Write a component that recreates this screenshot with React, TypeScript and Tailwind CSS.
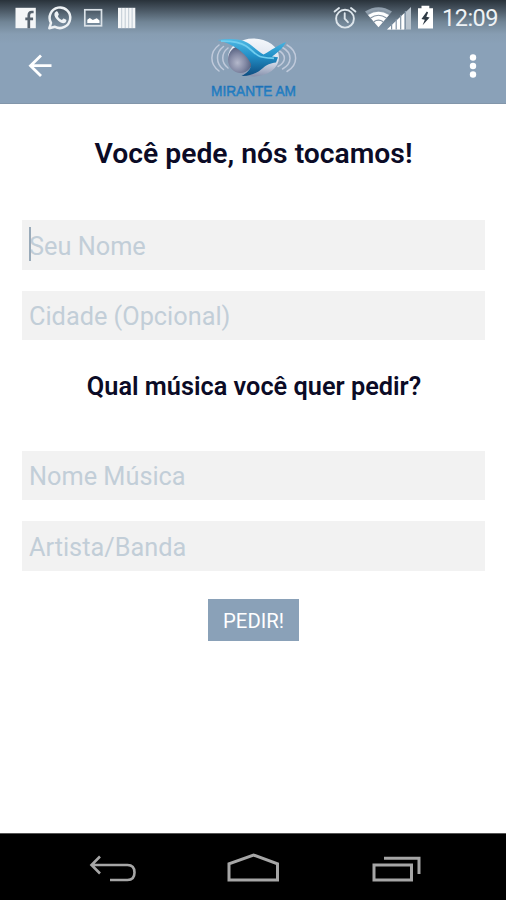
import { useState } from "react";

function StatusIcons() {
  return (
    <svg width="126" height="30" viewBox="13 2 126 30" fill="none">
      {/* facebook */}
      <path fill="#f4f6f8" d="M15.500 7.800h20.300v20.400h-20.300z" />
      <path stroke="#56626e" strokeWidth="2.700" d="M33.600 12h-1.800q-3 0-3 3.400V28.200M25.300 18.900h7.800" />
      {/* whatsapp */}
      <path
        d="M49.300 28.300l1.700-5.400a10.300 10.300 0 1 1 4 3.900z"
        stroke="#eef2f5"
        strokeWidth="2.500"
        strokeLinejoin="round"
      />
      <path
        fill="#eef2f5"
        d="M55.800 11.800c.8-.7 1.700-.5 2 .2l1 2.300c.2.600-.9 1.700-.9 2 .7 1.600 2.100 2.900 3.900 3.700.5 0 1.300-1.600 1.900-1.400l2.500 1.200c.6.400-.1 2.300-1 2.900-1.900 1.100-4.700.2-7-1.900-2.500-2.200-4.200-4.900-3.800-7 .2-.9.800-1.500 1.400-2z"
      />
      {/* picture */}
      <rect x="84.800" y="9.800" width="16.700" height="16" stroke="#dbe2e8" strokeWidth="1.700" />
      <path fill="#fff" d="M87.300 23v-3.200l2.500-1.800 3 2 4-1.800 2.700 2.300V23z" />
      {/* barcode */}
      <path fill="#f4f6f8" d="M118 7.800h17.300v20.400h-17.300z" />
      <path stroke="#b3bfca" strokeWidth=".8" d="M121.700 8v20M125.200 8v20M128.700 8v20M132.100 8v20" />
    </svg>
  );
}

function SystemIcons() {
  return (
    <svg width="104" height="30" viewBox="332 2 104 30" fill="none">
      {/* alarm */}
      <g stroke="#dde5eb" strokeWidth="1.900" strokeLinecap="round">
        <circle cx="346" cy="18.700" r="8.900" />
        <path d="M345.700 13.200v5.500l3.200 3.500" />
        <path d="M335.600 11.600l4.400-3.600M352 8l4.400 3.600" />
      </g>
      {/* wifi */}
      <path fill="#91a0ae" d="M366 11.500q13.500-8.500 27 0L379.500 27.200z" />
      <path fill="#fff" d="M369 15q10.500-6.500 21 0L379.500 27.200z" />
      <path
        stroke="#8795a4"
        strokeWidth="1.200"
        d="M368 14q11.500-7.500 23 0M371.500 18q8-5.500 16 0M374.800 21.800q4.700-3.200 9.400 0"
      />
      {/* signal */}
      <path fill="#b9c4ce" d="M388 29.500L412 7v22.500z" />
      <path fill="#fff" d="M388 29.500l17-16v16z" />
      <path stroke="#8193a5" strokeWidth="1.200" d="M392.600 24v5.500M397.200 19v10.500M401.700 15v14.500M406.400 11v18.500" />
      {/* battery */}
      <path fill="#fff" d="M419 8.300h3.500V5.800h7.800v2.500h3.700v20.200h-15z" />
      <path fill="#2e3a45" d="M427.800 11.500l-5.300 7.500 3.300.7-2.200 5.500 7-7.700-3.300-.7 1.800-4.300z" />
    </svg>
  );
}

function Logo() {
  return (
    <svg width="110" height="66" viewBox="200 34 110 66" fill="none">
      <defs>
        <radialGradient id="globe" cx=".38" cy=".62" r=".62">
          <stop offset="0" stopColor="#b4b8cb" />
          <stop offset=".5" stopColor="#858ba6" />
          <stop offset="1" stopColor="#4c5878" />
        </radialGradient>
        <linearGradient id="disc" x1=".6" y1="0" x2=".5" y2="1">
          <stop offset="0" stopColor="#f4f7fb" />
          <stop offset=".55" stopColor="#dce2ee" />
          <stop offset="1" stopColor="#8590ac" />
        </linearGradient>
        <linearGradient id="bird" x1="0" y1="0" x2="0" y2="1">
          <stop offset="0" stopColor="#4fb9e4" />
          <stop offset=".45" stopColor="#2391c8" />
          <stop offset="1" stopColor="#0d4c80" />
        </linearGradient>
        <linearGradient id="name" x1="0" y1="0" x2="0" y2="1">
          <stop offset="0" stopColor="#155da6" />
          <stop offset="1" stopColor="#2f9ad8" />
        </linearGradient>
      </defs>
      <g stroke="#c0cadb" strokeWidth="1.500" strokeLinecap="round">
        <path d="M219 45c-9.500 7-9.500 19 0 26M223.500 46.500c-8 6-8 17 0 23M228 48c-7 5.500-7 14.500 0 20" />
        <path d="M287 45c11.500 6.500 11.500 20 0 26.500M282.500 47.500c10 5.500 10 16 0 21.500M278 50c8.500 4.500 8.500 12 0 16.500" />
      </g>
      <ellipse cx="253.500" cy="57.500" rx="25.500" ry="19" fill="url(#disc)" />
      <ellipse cx="240.500" cy="59.500" rx="12.500" ry="13.500" fill="url(#globe)" />
      <path
        d="M217.500 40c11-1.500 22-1.500 29.500 2.500 7 4 11 9 16.500 12 8-4 14-9.500 22.500-12.500-2.500 5.500-8 10.500-14 14.500l6 .7-2 5.300c-6 .8-9 2-13 5.500-5 4.500-12.500 8.500-21.500 8 5.500-2.700 10-7.500 9.500-12C248 56.500 238 45.500 217.500 40z"
        fill="url(#bird)"
      />
      <path
        d="M221 41.200c11-.3 19 1 25 4.800 5.500 3.500 9 8.500 14 10.500 4 1.500 8 1.500 14 1.800"
        stroke="#6fcdef"
        strokeWidth="1.700"
      />
      <text
        x="211"
        y="95.500"
        textLength="85"
        lengthAdjust="spacingAndGlyphs"
        fontSize="15"
        fill="url(#name)"
        stroke="#1d76bd"
        strokeWidth=".5"
        className="font-['Liberation_Sans',sans-serif]"
      >
        MIRANTE AM
      </text>
    </svg>
  );
}

function Header() {
  return (
    <header className="h-[104px] shrink-0 border-b border-[#8296aa] bg-[#8aa1b8] bg-[linear-gradient(to_bottom,#29323a_0px,#46535f_9px,#718596_22px,#879db2_34px,#8aa1b8_44px)]">
      <div className="flex h-[34px] items-center justify-between pr-2 pl-[13px]">
        <StatusIcons />
        <div className="flex items-center gap-[7px]">
          <SystemIcons />
          <span className="pt-[3px] text-[23.500px] leading-none tracking-[-0.500px] text-[#eef2f5]">12:09</span>
        </div>
      </div>
      <div className="grid h-[66px] grid-cols-[1fr_110px_1fr] items-center pr-6 pl-7">
        <button aria-label="Voltar" className="justify-self-start pb-[3px]">
          <svg width="25" height="24" viewBox="0 0 25 24" fill="none" stroke="#fff" strokeWidth="2.800">
            <path d="M13 1.500L2.500 11.700 13 22M2.500 11.700H23.500" />
          </svg>
        </button>
        <Logo />
        <button aria-label="Menu" className="justify-self-end pb-[3px]">
          <svg width="14" height="24" viewBox="0 0 14 24" fill="#fff">
            <circle cx="5" cy="3.500" r="3.200" />
            <circle cx="5" cy="12" r="3.200" />
            <circle cx="5" cy="20.500" r="3.200" />
          </svg>
        </button>
      </div>
    </header>
  );
}

interface FieldProps {
  label: string;
  caret?: boolean;
}

function Field({ label, caret }: FieldProps) {
  const [value, setValue] = useState("");

  return (
    <div className="relative">
      {caret && <span className="absolute top-[7px] left-[7px] h-[34px] w-0.5 bg-[#9aabba]" />}
      <input
        value={value}
        onChange={(e) => setValue(e.target.value)}
        placeholder={label}
        className="block h-[49.500px] w-full bg-[#f2f2f2] px-[7px] pt-[3px] text-[25.300px] text-[#22303e] outline-none placeholder:text-[#c2ced8]"
      />
    </div>
  );
}

function NavBar() {
  return (
    <nav className="flex h-[67px] shrink-0 items-center justify-between border-t border-[#555] bg-black pt-0.5 pr-[84px] pl-[88px]">
      <svg width="49" height="30" viewBox="0 0 49 30" fill="none" stroke="#a6a6a6" strokeWidth="2.600">
        <path d="M12 3.500L3.500 12l8.500 8.500M3.500 12h36q7 0 7 7.500t-7 7.500H22" />
      </svg>
      <svg width="54" height="30" viewBox="0 0 54 30" fill="none" stroke="#a6a6a6" strokeWidth="3">
        <path d="M2 27V10.800L26.500 2l24 8.800V27z" />
      </svg>
      <svg width="51" height="30" viewBox="0 0 51 30" fill="none" stroke="#a6a6a6" strokeWidth="3">
        <path d="M3 12h37.500v15H3zM13 5.200H48V21" />
      </svg>
    </nav>
  );
}

export default function App() {
  return (
    <div className="flex h-[900px] w-[506px] flex-col overflow-hidden bg-white font-[Roboto,sans-serif]">
      <Header />
      <main className="flex flex-1 flex-col px-[21px] pt-8 pl-[22px] text-[#0b0b26]">
        <h1 className="text-center text-[28.300px] leading-9 font-semibold whitespace-nowrap">
          Você pede, nós tocamos!
        </h1>
        <div className="mt-12 flex flex-col gap-[21px]">
          <Field label="Seu Nome" caret />
          <Field label="Cidade (Opcional)" />
        </div>
        <h2 className="mt-[29px] pl-px text-center text-[25.300px] leading-9 font-semibold whitespace-nowrap">
          Qual música você quer pedir?
        </h2>
        <div className="mt-[45.500px] flex flex-col gap-[21px]">
          <Field label="Nome Música" />
          <Field label="Artista/Banda" />
        </div>
        <button className="mt-[28px] h-[42px] w-[91px] self-center bg-[#8aa1b8] pt-[3px] text-[20.300px] text-white">
          PEDIR!
        </button>
      </main>
      <NavBar />
    </div>
  );
}
